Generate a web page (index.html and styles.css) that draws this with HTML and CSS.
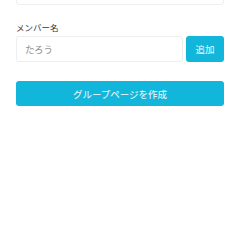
FILE: index.html
```html
<!DOCTYPE html>
<html lang="ja">
  <head>
    <meta charset="UTF-8" />
    <meta name="viewport" content="width=device-width, initial-scale=1.0" />
    <title>グループ作成</title>
    <link rel="stylesheet" href="styles.css">
  </head>
  <body>
    <div class="form">
      <div class="field">
        <input class="text-input top-input" type="text" />
      </div>
      <div class="field">
        <label class="label">メンバー名</label>
        <div class="member-row">
          <input class="text-input" type="text" placeholder="たろう" />
          <button class="btn btn-add">追加</button>
        </div>
      </div>
      <button class="btn btn-create">グループページを作成</button>
    </div>
  </body>
</html>
```

FILE: styles.css
```css
body {
  margin: 0;
  background: #fff;
  font-family: "Noto Sans CJK JP", "Noto Sans", sans-serif;
}

.form {
  display: flex;
  flex-direction: column;
  padding: 0 16px;
  margin-top: -21px;
}

.field {
  display: flex;
  flex-direction: column;
}

.top-input {
  margin-bottom: 16px;
}

.label {
  font-size: 8.5px;
  color: #333;
  line-height: 13px;
  margin-bottom: 2px;
}

.text-input {
  box-sizing: border-box;
  height: 26px;
  width: 100%;
  border: 1px solid #eceef0;
  border-radius: 3px;
  padding: 0 8px;
  font-family: inherit;
  font-size: 9.5px;
  color: #333;
  outline: none;
}

.text-input::placeholder {
  color: #8f8f8f;
}

.member-row {
  display: flex;
  gap: 3px;
}

.btn {
  border: none;
  border-radius: 3px;
  background: #12b6db;
  color: #f4fbfd;
  font-family: inherit;
  font-size: 9.5px;
  padding: 0;
  cursor: pointer;
}

.btn-add {
  flex: 0 0 38px;
  height: 26px;
}

.btn-create {
  height: 25px;
  margin-top: 19px;
}
```
